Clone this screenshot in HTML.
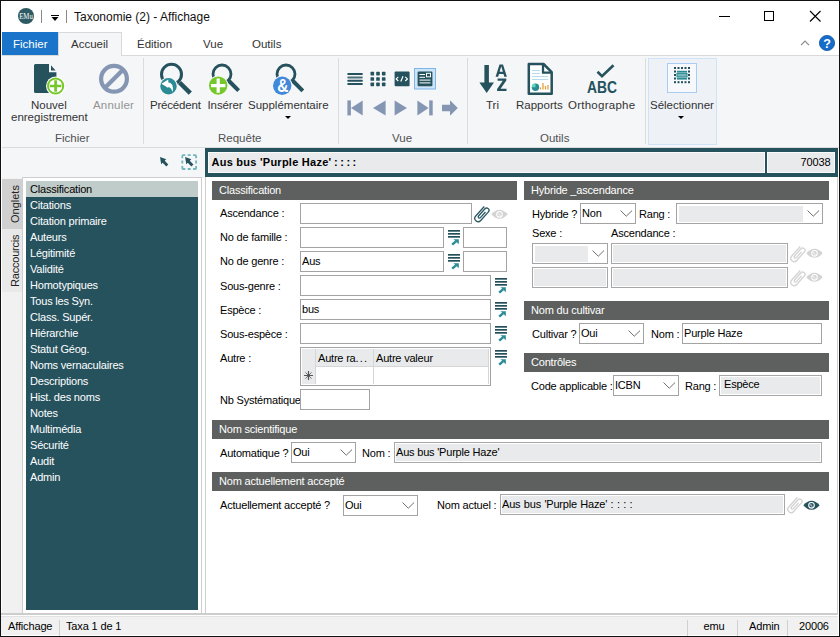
<!DOCTYPE html>
<html><head><meta charset="utf-8">
<style>
*{margin:0;padding:0;box-sizing:border-box}
html,body{width:840px;height:637px;overflow:hidden;background:#fff}
body{font-family:"Liberation Sans",sans-serif;position:relative}
.a{position:absolute}
.t{position:absolute;white-space:nowrap;line-height:1}
.rb{font-size:11.5px;color:#333}
.f{font-size:11px;letter-spacing:-0.2px;color:#000}
.hd{position:absolute;background:#5d605e;height:19px}
.hd span{position:absolute;left:7px;top:4px;font-size:11px;letter-spacing:-0.2px;color:#fff;white-space:nowrap;line-height:1}
.in{position:absolute;border:1px solid #a3a3a3;background:#fff;height:21px}
.dis{background:#e9eaeb;border:1px solid #a7a7a7;box-shadow:inset 0 0 0 1px #fff}
.it{position:absolute;top:4px;font-size:11px;letter-spacing:-0.2px;color:#000;white-space:nowrap;line-height:1}
.sb{font-size:11px;letter-spacing:-0.15px;color:#000}
.lst div{position:absolute;left:4px;font-size:11px;letter-spacing:-0.2px;color:#fff;white-space:nowrap;line-height:1}
</style></head><body>
<!-- window border -->
<div class="a" style="left:0;top:0;width:840px;height:637px;border:1px solid #111"></div>

<!-- title bar -->
<svg class="a" style="left:18px;top:8px" width="16" height="16"><circle cx="8" cy="8" r="8" fill="#2e5b63"/><text x="1.2" y="10.6" font-family="Liberation Serif" font-size="7.5" fill="#fff" textLength="13.6" lengthAdjust="spacingAndGlyphs">EMu</text></svg>
<div class="a" style="left:41px;top:10px;width:1px;height:13px;background:#8a8a8a"></div>
<div class="a" style="left:51px;top:15px;width:8px;height:1px;background:#000"></div>
<svg class="a" style="left:50px;top:16px" width="10" height="6"><path d="M1.5 1H8.5L5 5Z" fill="#000"/></svg>
<div class="a" style="left:66px;top:10px;width:1px;height:13px;background:#8a8a8a"></div>
<div class="t" style="left:74px;top:11px;font-size:12px;color:#111">Taxonomie (2) - Affichage</div>
<div class="a" style="left:719px;top:16px;width:11px;height:1px;background:#000"></div>
<div class="a" style="left:764px;top:11px;width:10px;height:10px;border:1px solid #000"></div>
<svg class="a" style="left:809px;top:10px" width="13" height="13"><path d="M1 1L11.5 11.5M11.5 1L1 11.5" stroke="#000" stroke-width="1.1"/></svg>

<!-- tabs -->
<div class="a" style="left:2px;top:32px;width:56px;height:23px;background:#1a74c9"></div>
<div class="t rb" style="left:13px;top:39px;color:#fff">Fichier</div>
<div class="a" style="left:58px;top:32px;width:64px;height:24px;background:#f5f6f8;border:1px solid #d8d9da;border-bottom:none"></div>
<div class="t rb" style="left:71px;top:39px">Accueil</div>
<div class="t rb" style="left:137px;top:39px">Édition</div>
<div class="t rb" style="left:203px;top:39px">Vue</div>
<div class="t rb" style="left:252px;top:39px">Outils</div>
<svg class="a" style="left:800px;top:40px" width="11" height="7"><path d="M1 5.2L5 1.2L9 5.2" stroke="#8a8a8a" fill="none" stroke-width="1.2"/></svg>
<svg class="a" style="left:819px;top:35px" width="16" height="16"><circle cx="8" cy="8" r="7.6" fill="#166cc8" stroke="#0d55a6" stroke-width="0.8"/><text x="8.1" y="12.9" font-family="Liberation Sans" font-weight="bold" font-size="12.5" fill="#fff" text-anchor="middle">?</text></svg>

<!-- ribbon -->
<div class="a" style="left:1px;top:55px;width:838px;height:93px;background:#f5f6f8;border-top:1px solid #d8d9da;border-bottom:1px solid #dadbdc"></div>
<div class="a" style="left:59px;top:55px;width:62px;height:1px;background:#f5f6f8"></div>
<div class="a" style="left:143px;top:58px;width:1px;height:86px;background:#dcdcdc"></div>
<div class="a" style="left:338px;top:58px;width:1px;height:86px;background:#dcdcdc"></div>
<div class="a" style="left:467px;top:58px;width:1px;height:86px;background:#dcdcdc"></div>
<div class="a" style="left:645px;top:58px;width:1px;height:86px;background:#dcdcdc"></div>

<!-- Fichier group -->
<svg class="a" style="left:28px;top:58px" width="44" height="42" viewBox="28 58 44 42">
<path d="M35.5 64H49V72.2H56.4V91.5Q56.4 93 55 93H35.5Q34 93 34 91.5V65.5Q34 64 35.5 64Z" fill="#26525e"/>
<path d="M51 65.3V70.6H55.6Z" fill="#26525e"/>
<circle cx="55.6" cy="86" r="9.6" fill="#fff"/>
<circle cx="55.6" cy="86" r="7.6" fill="#fff" stroke="#76c82a" stroke-width="2"/>
<path d="M55.6 80.2V91.8M49.8 86H61.4" stroke="#76c82a" stroke-width="2.7"/>
</svg>
<div class="t rb" style="left:31px;top:100px">Nouvel</div>
<div class="t rb" style="left:11px;top:112px">enregistrement</div>
<svg class="a" style="left:98px;top:63px" width="32" height="32"><circle cx="16" cy="15.8" r="12.9" fill="none" stroke="#8596b3" stroke-width="4.2"/><path d="M7 24.8L25 6.8" stroke="#8596b3" stroke-width="4.2"/></svg>
<div class="t rb" style="left:93px;top:100px;color:#939393;letter-spacing:0.2px">Annuler</div>
<div class="t rb" style="left:55px;top:133px;color:#505050">Fichier</div>


<!-- ribbon icons -->
<div class="a" style="left:648px;top:58px;width:69px;height:87px;background:#eef2f7;border:1px solid #cfe2f7"></div>
<div class="a" style="left:667px;top:63px;width:30px;height:30px;background:#f6f8fb;border:1px solid #a9cdf2"></div>

<svg class="a" style="left:150px;top:58px" width="48" height="42" viewBox="150 58 48 42">
<circle cx="171.5" cy="74.3" r="10" fill="none" stroke="#25525d" stroke-width="3"/>
<path d="M179.5 82.5L190.3 93.2" stroke="#25525d" stroke-width="4.5"/>
<circle cx="168.5" cy="86.3" r="9.3" fill="#f5f6f8"/>
<circle cx="168.5" cy="86.3" r="8.2" fill="#2a8b95"/>
<path d="M161.5 83.8L168.3 79.6V88Z" fill="#fff"/>
<path d="M167 82.3Q174.5 82 172.6 92.3Q171 86.8 167 86.6Z" fill="#fff"/>
</svg>
<svg class="a" style="left:204px;top:58px" width="48" height="42" viewBox="204 58 48 42">
<circle cx="222" cy="74" r="9" fill="none" stroke="#25525d" stroke-width="2.8"/>
<path d="M228.5 80.5L238.6 90.6" stroke="#25525d" stroke-width="4"/>
<circle cx="218.2" cy="85.6" r="10.2" fill="#f5f6f8"/>
<circle cx="218.2" cy="85.6" r="9.2" fill="#76c82a"/>
<path d="M218.2 78.5V92.7M211 85.6H225.4" stroke="#fff" stroke-width="3.2"/>
</svg>
<svg class="a" style="left:266px;top:58px" width="48" height="42" viewBox="266 58 48 42">
<circle cx="286" cy="74" r="9" fill="none" stroke="#25525d" stroke-width="2.8"/>
<path d="M292.5 80.5L302.8 90.8" stroke="#25525d" stroke-width="4"/>
<circle cx="282.2" cy="85.7" r="10.2" fill="#f5f6f8"/>
<circle cx="282.2" cy="85.7" r="9.2" fill="#3f88da"/>
<text x="277.2" y="91.6" font-family="Liberation Sans" font-weight="bold" font-size="17.5" fill="#fff" textLength="11.2" lengthAdjust="spacingAndGlyphs">&amp;</text>
</svg>
<!-- vue icons -->
<svg class="a" style="left:342px;top:66px" width="120" height="54" viewBox="342 66 120 54">
<rect x="347.3" y="73" width="15.5" height="2" rx="0.8" fill="#25525d"/>
<rect x="347.3" y="76.4" width="15.5" height="2" rx="0.8" fill="#4a6f77"/>
<rect x="347.3" y="79.7" width="15.5" height="2" rx="0.8" fill="#25525d"/>
<rect x="347.3" y="83" width="15.5" height="2" rx="0.8" fill="#25525d"/>
<g fill="#25525d">
<rect x="370.5" y="71.8" width="3.6" height="3.6" rx=".6"/><rect x="376.2" y="71.8" width="3.6" height="3.6" rx=".6"/><rect x="381.9" y="71.8" width="3.6" height="3.6" rx=".6"/>
<rect x="370.5" y="77.2" width="3.6" height="3.6" rx=".6"/><rect x="376.2" y="77.2" width="3.6" height="3.6" rx=".6"/><rect x="381.9" y="77.2" width="3.6" height="3.6" rx=".6"/>
<rect x="370.5" y="82.6" width="3.6" height="3.6" rx=".6"/><rect x="376.2" y="82.6" width="3.6" height="3.6" rx=".6"/><rect x="381.9" y="82.6" width="3.6" height="3.6" rx=".6"/>
<rect x="394.6" y="71.6" width="15" height="14.6" rx="1"/>
</g>
<path d="M398.3 76.8L396.2 78.9L398.3 81M403 76.3L400.8 81.5M405.3 76.8L407.4 78.9L405.3 81" stroke="#fff" stroke-width="1.2" fill="none"/>
<rect x="414.5" y="68.5" width="21" height="20.5" fill="#cde4f7" stroke="#7fb6ea" stroke-width="1"/>
<rect x="417.6" y="71.6" width="14.8" height="14.6" rx="1" fill="#25525d"/>
<path d="M419.5 74.5H425M419.5 77.3H425M419.5 80.1H430.5M419.5 82.9H430.5" stroke="#fff" stroke-width="1"/>
<rect x="426.5" y="73.3" width="4" height="3.5" fill="none" stroke="#fff" stroke-width="1"/>
<g fill="#8596b3">
<rect x="347.4" y="100.4" width="3.5" height="15"/>
<path d="M351 108L362.7 100.4V115.6Z"/>
<path d="M373 108L385.6 100.4V115.6Z"/>
<path d="M407 108L394.6 100.4V115.6Z"/>
<path d="M428.6 108L417.4 100.4V115.6Z"/>
<rect x="429.2" y="100.4" width="3.5" height="15"/>
<path d="M442 104.8H450V100.2L457.8 108L450 115.8V111.2H442Z"/>
</g>
</svg>
<!-- outils icons -->
<svg class="a" style="left:474px;top:58px" width="150" height="42" viewBox="474 58 150 42">
<rect x="484.4" y="65" width="4.5" height="18" fill="#25525d"/>
<path d="M479.4 82.5H494L486.7 93Z" fill="#25525d"/>
<path fill-rule="evenodd" d="M495.6 76.7L499.5 64.5H503L506.9 76.7H504.3L503.5 74H499L498.2 76.7ZM499.6 71.8H502.9L501.25 66.3Z" fill="#25525d"/>
<path d="M497.6 78.5H506.3V80.6L500.6 88.8H506.5V91H497.1V88.9L502.8 80.7H497.6Z" fill="#25525d"/>
<path d="M528.8 64H543.5L551.7 72.2V93.8H528.8Z" fill="#fff" stroke="#25525d" stroke-width="2.5" stroke-linejoin="round"/>
<path d="M543 64.5V72.7H551.2" fill="none" stroke="#25525d" stroke-width="2.3"/>
<path d="M532 70.5H540M532 73.5H540M532 76.5H548M532 79.5H548" stroke="#b9dbf2" stroke-width="1"/>
<circle cx="535.5" cy="87.3" r="3.7" fill="#2a8b95"/>
<path d="M535.5 87.3V83.6A3.7 3.7 0 0 0 531.8 87.3Z" fill="#5fd8b8"/>
<path d="M540.5 89.5V87.5M543 89.5V83M545.5 89.5V86M548 89.5V85" stroke="#e8a03a" stroke-width="1.3"/>
<path d="M597.5 71.8L602 76.2L613.5 65.2" fill="none" stroke="#25525d" stroke-width="2.6"/>
<text x="587" y="92.8" font-family="Liberation Sans" font-weight="bold" font-size="16.5" fill="#25525d" textLength="30" lengthAdjust="spacingAndGlyphs">ABC</text>
</svg>
<svg class="a" style="left:672px;top:66px" width="20" height="20" viewBox="672 66 20 20">
<g fill="#23505b">
<rect x="674" y="67" width="2" height="2"/><rect x="677.5" y="67" width="2" height="2"/><rect x="681" y="67" width="2" height="2"/><rect x="684.5" y="67" width="2" height="2"/><rect x="688" y="67" width="2" height="2"/>
<rect x="674" y="81.2" width="2" height="2"/><rect x="677.5" y="81.2" width="2" height="2"/><rect x="681" y="81.2" width="2" height="2"/><rect x="684.5" y="81.2" width="2" height="2"/><rect x="688" y="81.2" width="2" height="2"/>
<rect x="674" y="70.5" width="2" height="2"/><rect x="674" y="74" width="2" height="2"/><rect x="674" y="77.5" width="2" height="2"/>
<rect x="688" y="70.5" width="2" height="2"/><rect x="688" y="74" width="2" height="2"/><rect x="688" y="77.5" width="2" height="2"/>
</g>
<rect x="677" y="70.8" width="10" height="1.8" fill="#2a8b95"/>
<rect x="677" y="73.4" width="10" height="3.6" fill="#7cb8b8" stroke="#2a8b95" stroke-width="1"/>
<rect x="677" y="77.8" width="10" height="1.8" fill="#2a8b95"/>
</svg>

<!-- Requete group -->
<div class="t rb" style="left:150px;top:100px;letter-spacing:-0.2px">Précédent</div>
<div class="t rb" style="left:207.5px;top:100px;letter-spacing:-0.1px">Insérer</div>
<div class="t rb" style="left:248px;top:100px">Supplémentaire</div>
<div class="a" style="left:285px;top:116px;width:0;height:0;border-left:3px solid transparent;border-right:3px solid transparent;border-top:3px solid #000"></div>
<div class="t rb" style="left:218px;top:133px;color:#505050">Requête</div>

<!-- Vue group -->
<div class="t rb" style="left:392px;top:133px;color:#505050">Vue</div>

<!-- Outils -->
<div class="t rb" style="left:486px;top:100px">Tri</div>
<div class="t rb" style="left:516px;top:100px">Rapports</div>
<div class="t rb" style="left:568px;top:100px;letter-spacing:0.25px">Orthographe</div>
<div class="t rb" style="left:540px;top:133px;color:#505050">Outils</div>

<!-- Selectionner -->
<div class="t rb" style="left:650px;top:100px">Sélectionner</div>
<div class="a" style="left:678px;top:116px;width:0;height:0;border-left:3px solid transparent;border-right:3px solid transparent;border-top:3px solid #000"></div>

<!-- toolbar row below ribbon -->
<div class="a" style="left:1px;top:148px;width:204px;height:30px;background:#f5f6f8"></div>

<svg class="a" style="left:154px;top:150px" width="48" height="24" viewBox="154 150 48 24">
<path d="M160 157L166.2 159.3L161.2 164.2Z" fill="#25525d"/>
<path d="M162.5 160.5L167.3 165.5" stroke="#25525d" stroke-width="2.8"/>
<path d="M185.1 157L191.3 159.3L186.3 164.2Z" fill="#25525d"/>
<path d="M187.6 160.5L192.4 165.5" stroke="#25525d" stroke-width="2.8"/>
<path d="M182.3 158.2V156.2Q182.3 155.2 183.3 155.2H185.3M187.7 155.2H190.7M193.1 155.2H195.1Q196.1 155.2 196.1 156.2V158.2M196.1 160.6V163.6M196.1 166V168Q196.1 169 195.1 169H193.1M190.7 169H187.7M185.3 169H183.3Q182.3 169 182.3 168V166M182.3 163.6V160.6" fill="none" stroke="#72b6bc" stroke-width="1.8"/>
</svg>
<!-- left panel -->
<div class="a" style="left:1px;top:178px;width:201px;height:436px;background:#f1f1f1"></div>
<div class="a" style="left:2px;top:179px;width:20px;height:50px;background:#d0d0d0"></div>
<div class="a" style="left:2px;top:229px;width:20px;height:63px;background:#e9e9e9"></div>
<div class="t" style="left:10px;top:223px;font-size:11px;color:#222;transform:rotate(-90deg);transform-origin:0 0">Onglets</div>
<div class="t" style="left:10px;top:287px;font-size:11px;color:#222;letter-spacing:-0.2px;transform:rotate(-90deg);transform-origin:0 0">Raccourcis</div>
<div class="a" style="left:22px;top:177px;width:180px;height:437px;background:#fff;border:1px solid #cdcdcd"></div>
<div class="a lst" style="left:26px;top:181px;width:172px;height:429px;background:#26525e">
<div style="left:0;top:0;width:172px;height:16px;background:#c0ccc9"></div>
<div style="top:3px;color:#000">Classification</div>
<div style="top:19px">Citations</div>
<div style="top:35px">Citation primaire</div>
<div style="top:51px">Auteurs</div>
<div style="top:67px">Légitimité</div>
<div style="top:83px">Validité</div>
<div style="top:99px">Homotypiques</div>
<div style="top:115px">Tous les Syn.</div>
<div style="top:131px">Class. Supér.</div>
<div style="top:147px">Hiérarchie</div>
<div style="top:163px">Statut Géog.</div>
<div style="top:179px">Noms vernaculaires</div>
<div style="top:195px">Descriptions</div>
<div style="top:211px">Hist. des noms</div>
<div style="top:227px">Notes</div>
<div style="top:243px">Multimédia</div>
<div style="top:259px">Sécurité</div>
<div style="top:275px">Audit</div>
<div style="top:291px">Admin</div>
</div>

<!-- record header -->
<div class="a" style="left:205px;top:148px;width:633px;height:29px;background:#26525e"></div>
<div class="a" style="left:208px;top:152px;width:557px;height:21px;background:#e9eaeb;border:1px solid #fafafa"></div>
<div class="t" style="left:211.5px;top:157px;font-size:11px;font-weight:bold;color:#000"><span style="letter-spacing:0.25px">Aus bus 'Purple Haze'</span><span style="word-spacing:-0.5px"> : : : :</span></div>
<div class="a" style="left:767px;top:152px;width:68px;height:21px;background:#e9eaeb;border:1px solid #fafafa"></div>
<div class="t" style="left:800.5px;top:157px;font-size:11px;letter-spacing:-0.1px;color:#000">70038</div>

<!-- content area -->
<div class="a" style="left:205px;top:177px;width:633px;height:437px;background:#fff;border:1px solid #cfcfcf;border-top:none;border-bottom:none"></div>

<!-- status bar -->
<div class="a" style="left:1px;top:55px;width:1px;height:581px;background:#fff"></div>
<div class="a" style="left:1px;top:613px;width:837px;height:2px;background:#cdcdcd"></div>
<div class="a" style="left:1px;top:616px;width:838px;height:19px;background:#f1f1f1;border-top:1px solid #e2e2e2"></div>
<div class="a" style="left:838px;top:177px;width:1px;height:459px;background:#fff"></div>
<div class="t sb" style="left:8px;top:621px">Affichage</div>
<div class="a" style="left:59px;top:620px;width:1px;height:16px;background:#d0d0d0"></div>
<div class="t sb" style="left:66px;top:621px">Taxa 1 de 1</div>
<div class="a" style="left:687px;top:620px;width:1px;height:16px;background:#d0d0d0"></div>
<div class="t sb" style="left:703.5px;top:621px">emu</div>
<div class="a" style="left:737px;top:620px;width:1px;height:16px;background:#d0d0d0"></div>
<div class="t sb" style="left:749px;top:621px">Admin</div>
<div class="a" style="left:787px;top:620px;width:1px;height:16px;background:#d0d0d0"></div>
<div class="t sb" style="left:799px;top:621px">20006</div>

<!-- FORM -->
<div class="hd" style="left:212px;top:181px;width:305px"><span>Classification</span></div>
<div class="hd" style="left:524px;top:181px;width:305px"><span>Hybride _ascendance</span></div>
<div class="hd" style="left:524px;top:301px;width:305px"><span>Nom du cultivar</span></div>
<div class="hd" style="left:524px;top:353px;width:305px"><span>Contrôles</span></div>
<div class="hd" style="left:212px;top:420px;width:617px"><span>Nom scientifique</span></div>
<div class="hd" style="left:212px;top:472px;width:617px"><span>Nom actuellement accepté</span></div>

<!-- FIELDS -->
<div class="t f" style="left:220px;top:208px;">Ascendance :</div>
<div class="t f" style="left:220px;top:232px;">No de famille :</div>
<div class="t f" style="left:220px;top:256px;">No de genre :</div>
<div class="t f" style="left:220px;top:281px;">Sous-genre :</div>
<div class="t f" style="left:220px;top:305px;">Espèce :</div>
<div class="t f" style="left:220px;top:329px;">Sous-espèce :</div>
<div class="in" style="left:300px;top:203px;width:172px;height:21px;"></div>
<div class="in" style="left:300px;top:227px;width:144px;height:21px;"></div>
<div class="in" style="left:463px;top:227px;width:44px;height:21px;"></div>
<div class="in" style="left:300px;top:251px;width:144px;height:21px;"><span class="it" style="left:1px">Aus</span></div>
<div class="in" style="left:463px;top:251px;width:44px;height:21px;"></div>
<div class="in" style="left:300px;top:275px;width:191px;height:21px;"></div>
<div class="in" style="left:300px;top:299px;width:191px;height:21px;"><span class="it" style="left:1px">bus</span></div>
<div class="in" style="left:300px;top:323px;width:191px;height:21px;"></div>
<div class="t f" style="left:220px;top:353px;">Autre :</div>
<div class="t f" style="left:220px;top:395px;">Nb Systématique</div>
<div class="in" style="left:300px;top:389px;width:70px;height:21px;"></div>
<div class="t f" style="left:532px;top:209px;">Hybride ?</div>
<div class="in" style="left:580px;top:203px;width:56px;height:21px"><span class="it" style="left:1px">Non</span><svg class="a" style="left:39px;top:6px" width="13" height="8"><path d="M0.5 0.5L6.3 6.2L12.1 0.5" stroke="#6f6f6f" fill="none" stroke-width="1"/></svg></div>
<div class="t f" style="left:639px;top:209px;">Rang :</div>
<div class="in" style="left:676px;top:203px;width:147px;height:21px"><div class="a" style="left:2px;top:2px;width:124px;height:16px;background:#e9eaeb"></div><svg class="a" style="left:130px;top:6px" width="13" height="8"><path d="M0.5 0.5L6.3 6.2L12.1 0.5" stroke="#6f6f6f" fill="none" stroke-width="1"/></svg></div>
<div class="t f" style="left:532px;top:228px;">Sexe :</div>
<div class="t f" style="left:611px;top:228px;">Ascendance :</div>
<div class="in" style="left:532px;top:243px;width:76px;height:21px"><div class="a" style="left:2px;top:2px;width:53px;height:16px;background:#e9eaeb"></div><svg class="a" style="left:59px;top:6px" width="13" height="8"><path d="M0.5 0.5L6.3 6.2L12.1 0.5" stroke="#6f6f6f" fill="none" stroke-width="1"/></svg></div>
<div class="in dis" style="left:611px;top:243px;width:177px;height:21px;"></div>
<div class="in dis" style="left:532px;top:267px;width:76px;height:21px;"></div>
<div class="in dis" style="left:611px;top:267px;width:177px;height:21px;"></div>
<div class="t f" style="left:532px;top:329px;">Cultivar ?</div>
<div class="in" style="left:579px;top:323px;width:65px;height:21px"><span class="it" style="left:1px">Oui</span><svg class="a" style="left:48px;top:6px" width="13" height="8"><path d="M0.5 0.5L6.3 6.2L12.1 0.5" stroke="#6f6f6f" fill="none" stroke-width="1"/></svg></div>
<div class="t f" style="left:651px;top:329px;">Nom :</div>
<div class="in" style="left:682px;top:323px;width:140px;height:21px;"><span class="it" style="left:1px">Purple Haze</span></div>
<div class="t f" style="left:531px;top:381px;">Code applicable :</div>
<div class="in" style="left:613px;top:375px;width:66px;height:21px"><span class="it" style="left:1px">ICBN</span><svg class="a" style="left:49px;top:6px" width="13" height="8"><path d="M0.5 0.5L6.3 6.2L12.1 0.5" stroke="#6f6f6f" fill="none" stroke-width="1"/></svg></div>
<div class="t f" style="left:685px;top:381px;">Rang :</div>
<div class="in dis" style="left:719px;top:375px;width:103px;height:21px;"><span class="it" style="left:4px;top:3px">Espèce</span></div>
<div class="t f" style="left:220px;top:448px;">Automatique ?</div>
<div class="in" style="left:291px;top:442px;width:65px;height:21px"><span class="it" style="left:1px">Oui</span><svg class="a" style="left:48px;top:6px" width="13" height="8"><path d="M0.5 0.5L6.3 6.2L12.1 0.5" stroke="#6f6f6f" fill="none" stroke-width="1"/></svg></div>
<div class="t f" style="left:362px;top:448px;">Nom :</div>
<div class="in dis" style="left:394px;top:442px;width:428px;height:21px;"><span class="it" style="left:1px">Aus bus 'Purple Haze'</span></div>
<div class="t f" style="left:220px;top:500px;">Actuellement accepté ?</div>
<div class="in" style="left:343px;top:495px;width:75px;height:21px"><span class="it" style="left:1px">Oui</span><svg class="a" style="left:58px;top:6px" width="13" height="8"><path d="M0.5 0.5L6.3 6.2L12.1 0.5" stroke="#6f6f6f" fill="none" stroke-width="1"/></svg></div>
<div class="t f" style="left:437px;top:500px;">Nom actuel :</div>
<div class="in dis" style="left:500px;top:494px;width:285px;height:21px;"><span class="it" style="left:1px;top:4px;word-spacing:0.6px">Aus bus 'Purple Haze' : : : :</span></div>
<!-- ICONS -->
<svg class="a" style="left:472.2px;top:204px" width="20" height="20" viewBox="-10 -10 20 20"><path transform="rotate(42) scale(1.05)" d="M-3.2 -6.8V5.4A3.2 3.2 0 0 0 3.2 5.4V-5.6A2.2 2.2 0 0 0 -1.2 -5.6V3.6A1.2 1.2 0 0 0 1.2 3.6V-3.6" fill="none" stroke="#2b5863" stroke-width="1.25"/></svg>
<svg class="a" style="left:491px;top:209px" width="17" height="11" viewBox="0 0 17 11"><path d="M0.3 5.3Q8.5 -3.8 16.7 5.3Q8.5 14.4 0.3 5.3Z" fill="#d3d3d3"/><circle cx="8.5" cy="5.3" r="2.8" fill="#d3d3d3" stroke="#fff" stroke-width="1.1"/><path d="M7.9 3.9V5.6L9.5 6.5" stroke="#fff" stroke-width="0.8" fill="none"/></svg>
<svg class="a" style="left:448px;top:229px" width="13" height="17" viewBox="0 0 13 17"><g fill="#23505b"><rect x="0" y="1" width="12" height="1.7"/><rect x="0" y="4" width="12" height="1.7"/><rect x="0" y="7" width="12" height="1.7"/></g><path d="M4.2 15.6L8 12.3" stroke="#2a8b95" stroke-width="2.4"/><path d="M5.5 10.3H10.8V15.3Z" fill="#2a8b95"/></svg>
<svg class="a" style="left:448px;top:253px" width="13" height="17" viewBox="0 0 13 17"><g fill="#23505b"><rect x="0" y="1" width="12" height="1.7"/><rect x="0" y="4" width="12" height="1.7"/><rect x="0" y="7" width="12" height="1.7"/></g><path d="M4.2 15.6L8 12.3" stroke="#2a8b95" stroke-width="2.4"/><path d="M5.5 10.3H10.8V15.3Z" fill="#2a8b95"/></svg>
<svg class="a" style="left:495px;top:277px" width="13" height="17" viewBox="0 0 13 17"><g fill="#23505b"><rect x="0" y="1" width="12" height="1.7"/><rect x="0" y="4" width="12" height="1.7"/><rect x="0" y="7" width="12" height="1.7"/></g><path d="M4.2 15.6L8 12.3" stroke="#2a8b95" stroke-width="2.4"/><path d="M5.5 10.3H10.8V15.3Z" fill="#2a8b95"/></svg>
<svg class="a" style="left:495px;top:301px" width="13" height="17" viewBox="0 0 13 17"><g fill="#23505b"><rect x="0" y="1" width="12" height="1.7"/><rect x="0" y="4" width="12" height="1.7"/><rect x="0" y="7" width="12" height="1.7"/></g><path d="M4.2 15.6L8 12.3" stroke="#2a8b95" stroke-width="2.4"/><path d="M5.5 10.3H10.8V15.3Z" fill="#2a8b95"/></svg>
<svg class="a" style="left:495px;top:325px" width="13" height="17" viewBox="0 0 13 17"><g fill="#23505b"><rect x="0" y="1" width="12" height="1.7"/><rect x="0" y="4" width="12" height="1.7"/><rect x="0" y="7" width="12" height="1.7"/></g><path d="M4.2 15.6L8 12.3" stroke="#2a8b95" stroke-width="2.4"/><path d="M5.5 10.3H10.8V15.3Z" fill="#2a8b95"/></svg>
<svg class="a" style="left:495px;top:349px" width="13" height="17" viewBox="0 0 13 17"><g fill="#23505b"><rect x="0" y="1" width="12" height="1.7"/><rect x="0" y="4" width="12" height="1.7"/><rect x="0" y="7" width="12" height="1.7"/></g><path d="M4.2 15.6L8 12.3" stroke="#2a8b95" stroke-width="2.4"/><path d="M5.5 10.3H10.8V15.3Z" fill="#2a8b95"/></svg>
<svg class="a" style="left:788.2px;top:243.6px" width="20" height="20" viewBox="-10 -10 20 20"><path transform="rotate(42) scale(1.05)" d="M-3.2 -6.8V5.4A3.2 3.2 0 0 0 3.2 5.4V-5.6A2.2 2.2 0 0 0 -1.2 -5.6V3.6A1.2 1.2 0 0 0 1.2 3.6V-3.6" fill="none" stroke="#d3d3d3" stroke-width="1.25"/></svg>
<svg class="a" style="left:806px;top:248px" width="17" height="11" viewBox="0 0 17 11"><path d="M0.3 5.3Q8.5 -3.8 16.7 5.3Q8.5 14.4 0.3 5.3Z" fill="#d3d3d3"/><circle cx="8.5" cy="5.3" r="2.8" fill="#d3d3d3" stroke="#fff" stroke-width="1.1"/><path d="M7.9 3.9V5.6L9.5 6.5" stroke="#fff" stroke-width="0.8" fill="none"/></svg>
<svg class="a" style="left:788.2px;top:267.6px" width="20" height="20" viewBox="-10 -10 20 20"><path transform="rotate(42) scale(1.05)" d="M-3.2 -6.8V5.4A3.2 3.2 0 0 0 3.2 5.4V-5.6A2.2 2.2 0 0 0 -1.2 -5.6V3.6A1.2 1.2 0 0 0 1.2 3.6V-3.6" fill="none" stroke="#d3d3d3" stroke-width="1.25"/></svg>
<svg class="a" style="left:806px;top:272px" width="17" height="11" viewBox="0 0 17 11"><path d="M0.3 5.3Q8.5 -3.8 16.7 5.3Q8.5 14.4 0.3 5.3Z" fill="#d3d3d3"/><circle cx="8.5" cy="5.3" r="2.8" fill="#d3d3d3" stroke="#fff" stroke-width="1.1"/><path d="M7.9 3.9V5.6L9.5 6.5" stroke="#fff" stroke-width="0.8" fill="none"/></svg>
<svg class="a" style="left:785px;top:495px" width="20" height="20" viewBox="-10 -10 20 20"><path transform="rotate(42) scale(1.05)" d="M-3.2 -6.8V5.4A3.2 3.2 0 0 0 3.2 5.4V-5.6A2.2 2.2 0 0 0 -1.2 -5.6V3.6A1.2 1.2 0 0 0 1.2 3.6V-3.6" fill="none" stroke="#d3d3d3" stroke-width="1.25"/></svg>
<svg class="a" style="left:803px;top:500px" width="17" height="11" viewBox="0 0 17 11"><path d="M0.3 5.3Q8.5 -3.8 16.7 5.3Q8.5 14.4 0.3 5.3Z" fill="#25525d"/><circle cx="8.5" cy="5.3" r="2.8" fill="#25525d" stroke="#fff" stroke-width="1.1"/><path d="M7.9 3.9V5.6L9.5 6.5" stroke="#fff" stroke-width="0.8" fill="none"/></svg>
<div class="a" style="left:300px;top:347px;width:191px;height:39px;border:1px solid #a3a3a3;background:#fff"></div>
<div class="a" style="left:302px;top:349px;width:187px;height:18px;background:#e9eaeb;border-bottom:1px solid #d6d6d6"></div>
<div class="a" style="left:302px;top:349px;width:14px;height:35px;background:#e9eaeb;border-right:1px solid #d6d6d6"></div>
<div class="a" style="left:373px;top:349px;width:1px;height:35px;background:#d6d6d6"></div>
<div class="a" style="left:488px;top:349px;width:1px;height:35px;background:#d6d6d6"></div>
<div class="t f" style="left:318px;top:353px">Autre ra<span style="letter-spacing:1.2px">...</span></div>
<div class="t f" style="left:376px;top:353px">Autre valeur</div>
<svg class="a" style="left:303px;top:370px" width="11" height="11"><path d="M5.5 1V10M1 5.5H10" stroke="#555" stroke-width="1.2"/><path d="M2.4 2.4L8.6 8.6M8.6 2.4L2.4 8.6" stroke="#666" stroke-width="0.9"/><circle cx="5.5" cy="5.5" r="1.4" fill="#555"/></svg>
</body></html>
